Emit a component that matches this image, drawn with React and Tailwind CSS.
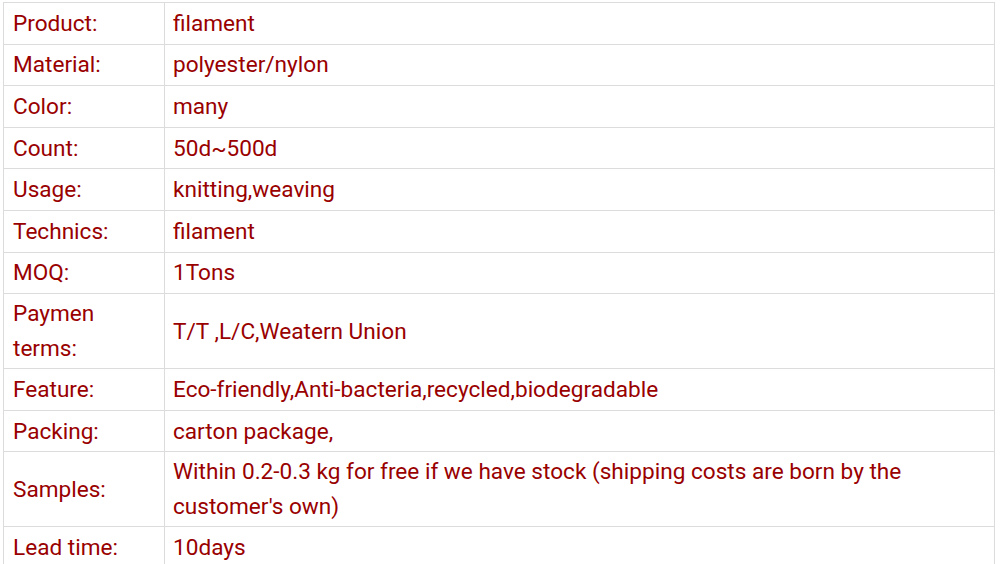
import React from 'react';

const ROWS = [
  ['Product:', 'filament'],
  ['Material:', 'polyester/nylon'],
  ['Color:', 'many'],
  ['Count:', '50d~500d'],
  ['Usage:', 'knitting,weaving'],
  ['Technics:', 'filament'],
  ['MOQ:', '1Tons'],
  ['Paymen terms:', 'T/T ,L/C,Weatern Union'],
  ['Feature:', 'Eco-friendly,Anti-bacteria,recycled,biodegradable'],
  ['Packing:', 'carton package,'],
  ['Samples:', "Within 0.2-0.3 kg for free if we have stock (shipping costs are born by the customer's own)"],
  ['Lead time:', '10days'],
];

export default function App() {
  return (
    <div className="h-[564px] w-[1000px] overflow-hidden bg-white pl-[3px] pt-[2px]">
      <table className="w-[992px] table-fixed border-collapse font-['Roboto',sans-serif] text-[22.6px] leading-[35px] text-[#990000]">
        <colgroup>
          <col className="w-[161px]" />
          <col />
        </colgroup>
        <tbody>
          {ROWS.map(([label, value]) => (
            <tr key={label} className="h-[41.6px]">
              <td className="border border-[#dcdcdc] px-[9px] py-[2px] align-middle">{label}</td>
              <td className="border border-[#dcdcdc] pl-[8px] pr-[9px] py-[2px] align-middle">{value}</td>
            </tr>
          ))}
        </tbody>
      </table>
    </div>
  );
}
